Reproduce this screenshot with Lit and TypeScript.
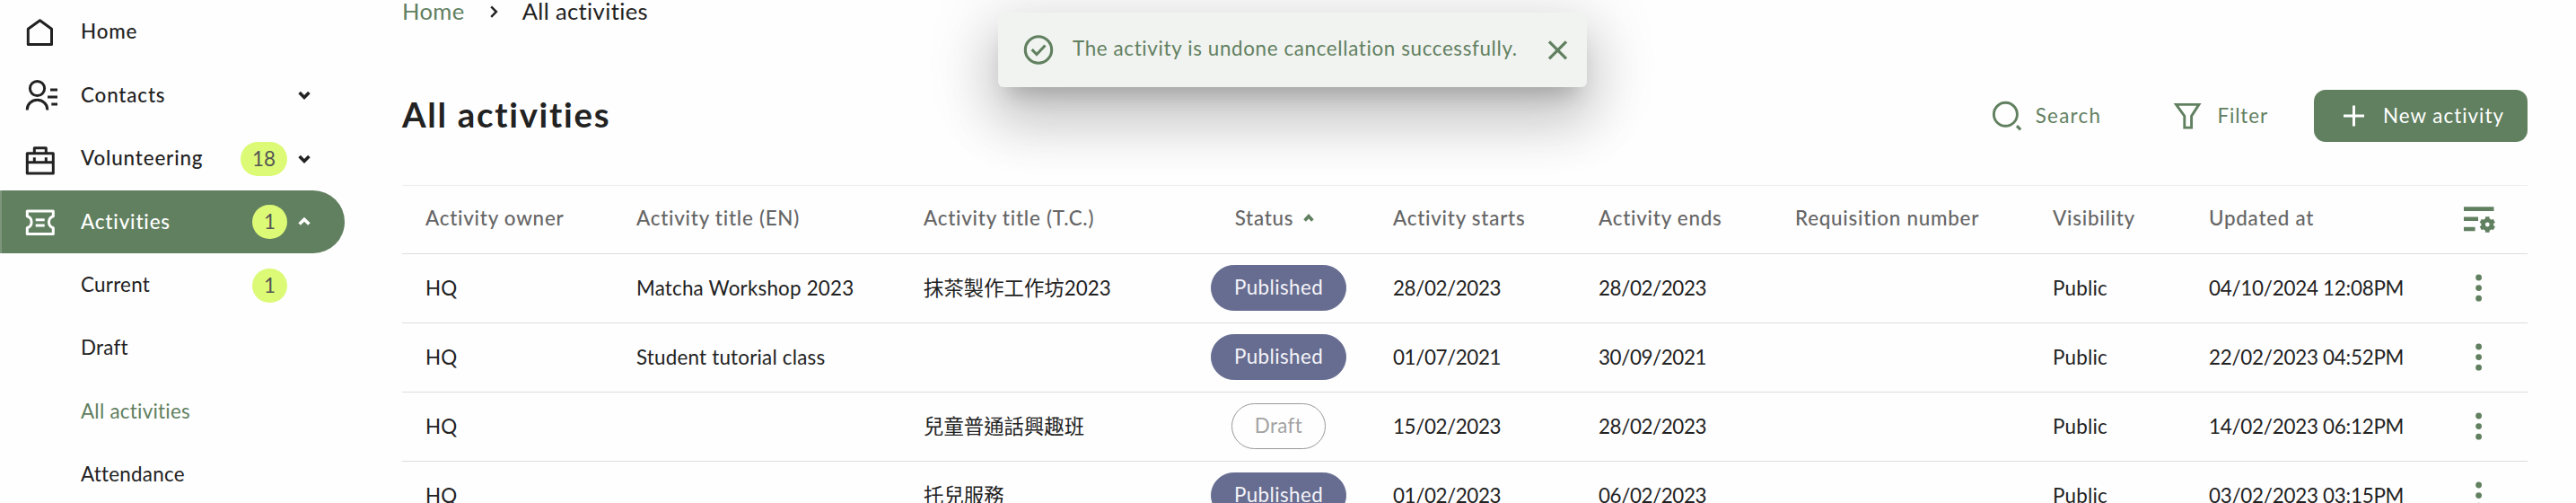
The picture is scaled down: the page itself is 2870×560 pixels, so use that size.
import { LitElement, html, css, svg, nothing } from 'lit';
import { customElement, property, state } from 'lit/decorators.js';
import { classMap } from 'lit/directives/class-map.js';

interface NavItem {
    label: string;
    icon?: string;
    badge?: number;
    chevron?: 'up' | 'down';
    active?: boolean;
    current?: boolean;
}

interface Activity {
    owner: string;
    titleEn: string;
    titleTc: string;
    status: 'Published' | 'Draft';
    starts: string;
    ends: string;
    requisition: string;
    visibility: string;
    updated: string;
}

const NAV: NavItem[] = [
    { label: 'Home', icon: 'home' },
    { label: 'Contacts', icon: 'contacts', chevron: 'down' },
    { label: 'Volunteering', icon: 'briefcase', badge: 18, chevron: 'down' },
    { label: 'Activities', icon: 'ticket', badge: 1, chevron: 'up', active: true },
    { label: 'Current', badge: 1 },
    { label: 'Draft' },
    { label: 'All activities', current: true },
    { label: 'Attendance' }
];

const ACTIVITIES: Activity[] = [
    { owner: 'HQ', titleEn: 'Matcha Workshop 2023', titleTc: '抹茶製作工作坊2023', status: 'Published', starts: '28/02/2023', ends: '28/02/2023', requisition: '', visibility: 'Public', updated: '04/10/2024 12:08PM' },
    { owner: 'HQ', titleEn: 'Student tutorial class', titleTc: '', status: 'Published', starts: '01/07/2021', ends: '30/09/2021', requisition: '', visibility: 'Public', updated: '22/02/2023 04:52PM' },
    { owner: 'HQ', titleEn: '', titleTc: '兒童普通話興趣班', status: 'Draft', starts: '15/02/2023', ends: '28/02/2023', requisition: '', visibility: 'Public', updated: '14/02/2023 06:12PM' },
    { owner: 'HQ', titleEn: '', titleTc: '托兒服務', status: 'Published', starts: '01/02/2023', ends: '06/02/2023', requisition: '', visibility: 'Public', updated: '03/02/2023 03:15PM' }
];

// Every icon is drawn on a 36x36 grid
const ICONS: Record<string, unknown> = {
    home: svg`<path d="M6.300 14.300 19.500 4.700l13 9.600v17.200H6.300z" stroke-linejoin="round" />`,
    contacts: svg`
        <circle cx="16.500" cy="10.500" r="8.100" />
        <path d="M5.300 34.500v-1a11.200 10.200 0 0 1 22.400 0v1" />
        <path d="M31 12h8M28 20h11M32.300 28h6.700" />`,
    briefcase: svg`
        <path d="M5.300 11.800h29v22.200h-29z" stroke-linejoin="round" />
        <path d="M13.300 11.500v-5.700h13v5.700M5.300 21.800h29M13.300 16.200v5.600M26.300 16.200v5.600" stroke-linejoin="round" />`,
    ticket: svg`
        <path d="M5.300 6h29v5.700a6.800 6.800 0 0 0 0 13v6.700h-29v-6.700a6.800 6.800 0 0 0 0-13z" stroke-linejoin="round" />
        <path d="M14.700 15.700h10M14.700 21.900h10" stroke-width="3" />`,
    down: svg`<path d="m12.600 15 5.400 5.400 5.400-5.400" stroke-width="3.600" />`,
    up: svg`<path d="m12.600 20.600 5.400-5.400 5.400 5.400" stroke-width="3.600" />`,
    sort: svg`<path d="m13.600 21.500 4.400-4.800 4.400 4.800" stroke-width="3.600" />`,
    right: svg`<path d="m15.200 12.300 5.700 5.800-5.700 5.800" stroke-width="2.500" />`,
    search: svg`<circle cx="16.400" cy="16.300" r="13" stroke-width="2.900" /><path d="m29 29.200 4.200 4.200" stroke-width="3.200" />`,
    filter: svg`<path d="M5.500 5.400h25.400l-8.300 12.700v13h-7.800v-13z" stroke-width="2.900" />`,
    plus: svg`<path d="M18.500 6.500v23M7 18h23" />`,
    check: svg`<circle cx="18" cy="17.500" r="14.700" stroke-width="3.100" /><path d="m10.700 17.200 5.300 5.300 9.500-10" stroke-width="3.100" />`,
    close: svg`<path d="m9 8.300 19 19M28 8.300l-19 19" stroke-width="3.300" />`,
    columns: svg`
        <path d="M2 5.600h33.500M2 16.800h16M2 28h12.600" stroke-width="4.600" />
        <circle cx="28.300" cy="23" r="4.700" stroke-width="4.600" />
        <path d="M28.300 14.300v3M28.300 28.700v3M20.800 18.700l2.600 1.500M33.200 25.800l2.600 1.500M20.800 27.300l2.600-1.500M33.200 20.200l2.600-1.500" stroke-width="4.600" />`,
    more: svg`<g fill="currentColor" stroke="none"><circle cx="18.600" cy="6" r="3.400" /><circle cx="18.600" cy="17.600" r="3.400" /><circle cx="18.600" cy="29.200" r="3.400" /></g>`
};

@customElement('app-icon')
export class AppIcon extends LitElement {
    static styles = css`
        :host {
            display: block;
            flex: none;
            width: 36px;
            height: 36px;
        }
        svg {
            display: block;
            overflow: visible;
        }
    `;

    @property() name = '';

    render() {
        return html`
            <svg width="36" height="36" viewBox="0 0 36 36" fill="none" stroke="currentColor" stroke-width="3">
                ${ICONS[this.name]}
            </svg>
        `;
    }
}

@customElement('side-nav')
export class SideNav extends LitElement {
    static styles = css`
        :host {
            display: block;
            flex: none;
            width: 384px;
        }
        .item {
            display: flex;
            align-items: center;
            box-sizing: border-box;
            height: 70.4px;
            padding: 0 49px 0 25px;
            letter-spacing: 0.25px;
        }
        .item.main {
            font-weight: 500;
            letter-spacing: 0.85px;
        }
        .item.active {
            background: #618060;
            border-left: 2px solid #7b967a;
            padding-left: 23px;
            border-radius: 0 36px 36px 0;
            color: #fff;
        }
        .item.current {
            color: #618060;
        }
        .slot {
            width: 65px;
        }
        .label {
            flex: 1;
            padding-bottom: 2px;
        }
        .badge {
            box-sizing: border-box;
            min-width: 39px;
            height: 38px;
            padding: 0 13px;
            border-radius: 20px;
            background: #dcfa76;
            color: #555;
            line-height: 37px;
            text-align: center;
            font-weight: 400;
            letter-spacing: 0;
        }
        .tail {
            display: flex;
            align-items: center;
            justify-content: flex-end;
            gap: 1px;
            margin-right: -22px;
        }
        .tail.plain {
            margin-right: 15px;
        }
    `;

    @property({ attribute: false }) items: NavItem[] = [];

    renderItem(item: NavItem) {
        const classes = { item: true, main: !!item.icon, active: !!item.active, current: !!item.current };
        return html`
            <div class=${classMap(classes)}>
                <div class="slot">${item.icon ? html`<app-icon name=${item.icon}></app-icon>` : nothing}</div>
                <span class="label">${item.label}</span>
                <div class=${classMap({ tail: true, plain: !item.chevron })}>
                    ${item.badge ? html`<span class="badge">${item.badge}</span>` : nothing}
                    ${item.chevron ? html`<app-icon name=${item.chevron}></app-icon>` : nothing}
                </div>
            </div>
        `;
    }

    render() {
        return html`${this.items.map(item => this.renderItem(item))}`;
    }
}

@customElement('activity-table')
export class ActivityTable extends LitElement {
    static styles = css`
        :host {
            display: block;
        }
        .row {
            display: grid;
            grid-template-columns: 235px 320px 320px 203px 229px 219px 287px 174px 271px 110px;
            align-items: center;
            box-sizing: border-box;
            height: 77px;
            border-bottom: 1px solid #ddd;
            letter-spacing: 0.2px;
        }
        .row.head {
            border-top: 1px solid #eee;
            color: #666;
            font-weight: 500;
            letter-spacing: 0.75px;
        }
        .cell {
            padding: 0 0 1px 26px;
            white-space: nowrap;
        }
        .head .cell {
            padding-bottom: 5px;
        }
        .tc {
            letter-spacing: 0;
        }
        .date {
            letter-spacing: -0.4px;
        }
        .updated {
            letter-spacing: -0.25px;
        }
        .center,
        .head .center {
            display: flex;
            justify-content: center;
            align-items: center;
            padding-left: 0;
        }
        .head .status {
            height: 27px;
            padding-right: 21px;
        }
        .sort {
            width: 20px;
            margin: 0 -8px 0 -1px;
            color: #618060;
        }
        .icon,
        .head .icon {
            padding-bottom: 0;
            color: #618060;
        }
        .pill {
            box-sizing: border-box;
            height: 51px;
            padding: 0 25px;
            border: 1px solid #676d91;
            border-radius: 26px;
            background: #676d91;
            color: #f4f4f8;
            line-height: 47px;
            letter-spacing: 0.4px;
        }
        .pill.draft {
            border-color: #999;
            background: none;
            color: #a3a3a3;
        }
    `;

    @property({ attribute: false }) rows: Activity[] = [];

    renderRow(row: Activity) {
        return html`
            <div class="row">
                <div class="cell">${row.owner}</div>
                <div class="cell">${row.titleEn}</div>
                <div class="cell tc">${row.titleTc}</div>
                <div class="cell center">
                    <span class=${classMap({ pill: true, draft: row.status === 'Draft' })}>${row.status}</span>
                </div>
                <div class="cell date">${row.starts}</div>
                <div class="cell date">${row.ends}</div>
                <div class="cell">${row.requisition}</div>
                <div class="cell">${row.visibility}</div>
                <div class="cell updated">${row.updated}</div>
                <div class="cell center icon"><app-icon name="more"></app-icon></div>
            </div>
        `;
    }

    render() {
        return html`
            <div class="row head">
                <div class="cell">Activity owner</div>
                <div class="cell">Activity title (EN)</div>
                <div class="cell">Activity title (T.C.)</div>
                <div class="cell center status">Status <app-icon class="sort" name="sort"></app-icon></div>
                <div class="cell">Activity starts</div>
                <div class="cell">Activity ends</div>
                <div class="cell">Requisition number</div>
                <div class="cell">Visibility</div>
                <div class="cell">Updated at</div>
                <div class="cell center icon"><app-icon name="columns"></app-icon></div>
            </div>
            ${this.rows.map(row => this.renderRow(row))}
        `;
    }
}

@customElement('app-root')
export class AppRoot extends LitElement {
    static styles = css`
        :host {
            display: flex;
            position: relative;
            box-sizing: border-box;
            width: 100%;
            height: 560px;
            overflow: hidden;
            background: #fefefe;
            color: #222;
            font-family: Lato, 'Noto Sans CJK TC', sans-serif;
            font-size: 22.4px;
            line-height: 27px;
        }
        side-nav {
            padding-top: 0.8px;
        }
        .main {
            flex: 1;
            min-width: 0;
            padding: 0 54px 0 64px;
        }
        .breadcrumb {
            display: flex;
            align-items: center;
            height: 24px;
            font-size: 25.6px;
            letter-spacing: 0.35px;
        }
        .breadcrumb app-icon {
            margin: 2px 14px 0 14px;
        }
        .link {
            color: #618060;
        }
        .bar {
            display: flex;
            align-items: center;
            height: 58px;
            margin: 76px 0 48px;
        }
        .title {
            flex: 1;
            margin: 0;
            padding-bottom: 5px;
            font-size: 38.4px;
            line-height: 46px;
            font-weight: 700;
            letter-spacing: 1.7px;
        }
        .action {
            display: flex;
            align-items: center;
            color: #618060;
            letter-spacing: 0.9px;
        }
        .action span,
        .create span {
            padding-bottom: 2px;
        }
        .action.search {
            gap: 14px;
            margin-right: 78px;
            letter-spacing: 1.3px;
        }
        .action.filter {
            gap: 15px;
            margin-right: 51px;
        }
        .create {
            display: flex;
            align-items: center;
            gap: 15px;
            box-sizing: border-box;
            width: 238px;
            height: 58px;
            padding-left: 26px;
            border-radius: 13px;
            background: #618060;
            color: #fff;
            letter-spacing: 1px;
            white-space: nowrap;
        }
        .toast {
            position: absolute;
            top: 14px;
            left: 1112px;
            display: flex;
            align-items: center;
            box-sizing: border-box;
            width: 656px;
            height: 83px;
            padding: 0 15px 0 27px;
            border-radius: 6px;
            background: #f1f3f0;
            box-shadow:
                0 17.6px 24px -11.2px rgba(0, 0, 0, 0.2),
                0 38.4px 60.8px 4.8px rgba(0, 0, 0, 0.14),
                0 14.4px 73.6px 12.8px rgba(0, 0, 0, 0.12);
            color: #618060;
            letter-spacing: 0.63px;
        }
        .message {
            flex: 1;
            padding: 0 0 4px 20px;
            white-space: nowrap;
        }
    `;

    @state() toast = 'The activity is undone cancellation successfully.';

    closeToast() {
        this.toast = '';
    }

    render() {
        return html`
            <side-nav .items=${NAV}></side-nav>
            <div class="main">
                <div class="breadcrumb">
                    <span class="link">Home</span>
                    <app-icon name="right"></app-icon>
                    <span>All activities</span>
                </div>
                <div class="bar">
                    <h1 class="title">All activities</h1>
                    <div class="action search"><app-icon name="search"></app-icon><span>Search</span></div>
                    <div class="action filter"><app-icon name="filter"></app-icon><span>Filter</span></div>
                    <div class="create"><app-icon name="plus"></app-icon><span>New activity</span></div>
                </div>
                <activity-table .rows=${ACTIVITIES}></activity-table>
            </div>
            ${this.toast ? html`
                <div class="toast">
                    <app-icon name="check"></app-icon>
                    <span class="message">${this.toast}</span>
                    <app-icon name="close" @click=${this.closeToast}></app-icon>
                </div>
            ` : nothing}
        `;
    }
}
